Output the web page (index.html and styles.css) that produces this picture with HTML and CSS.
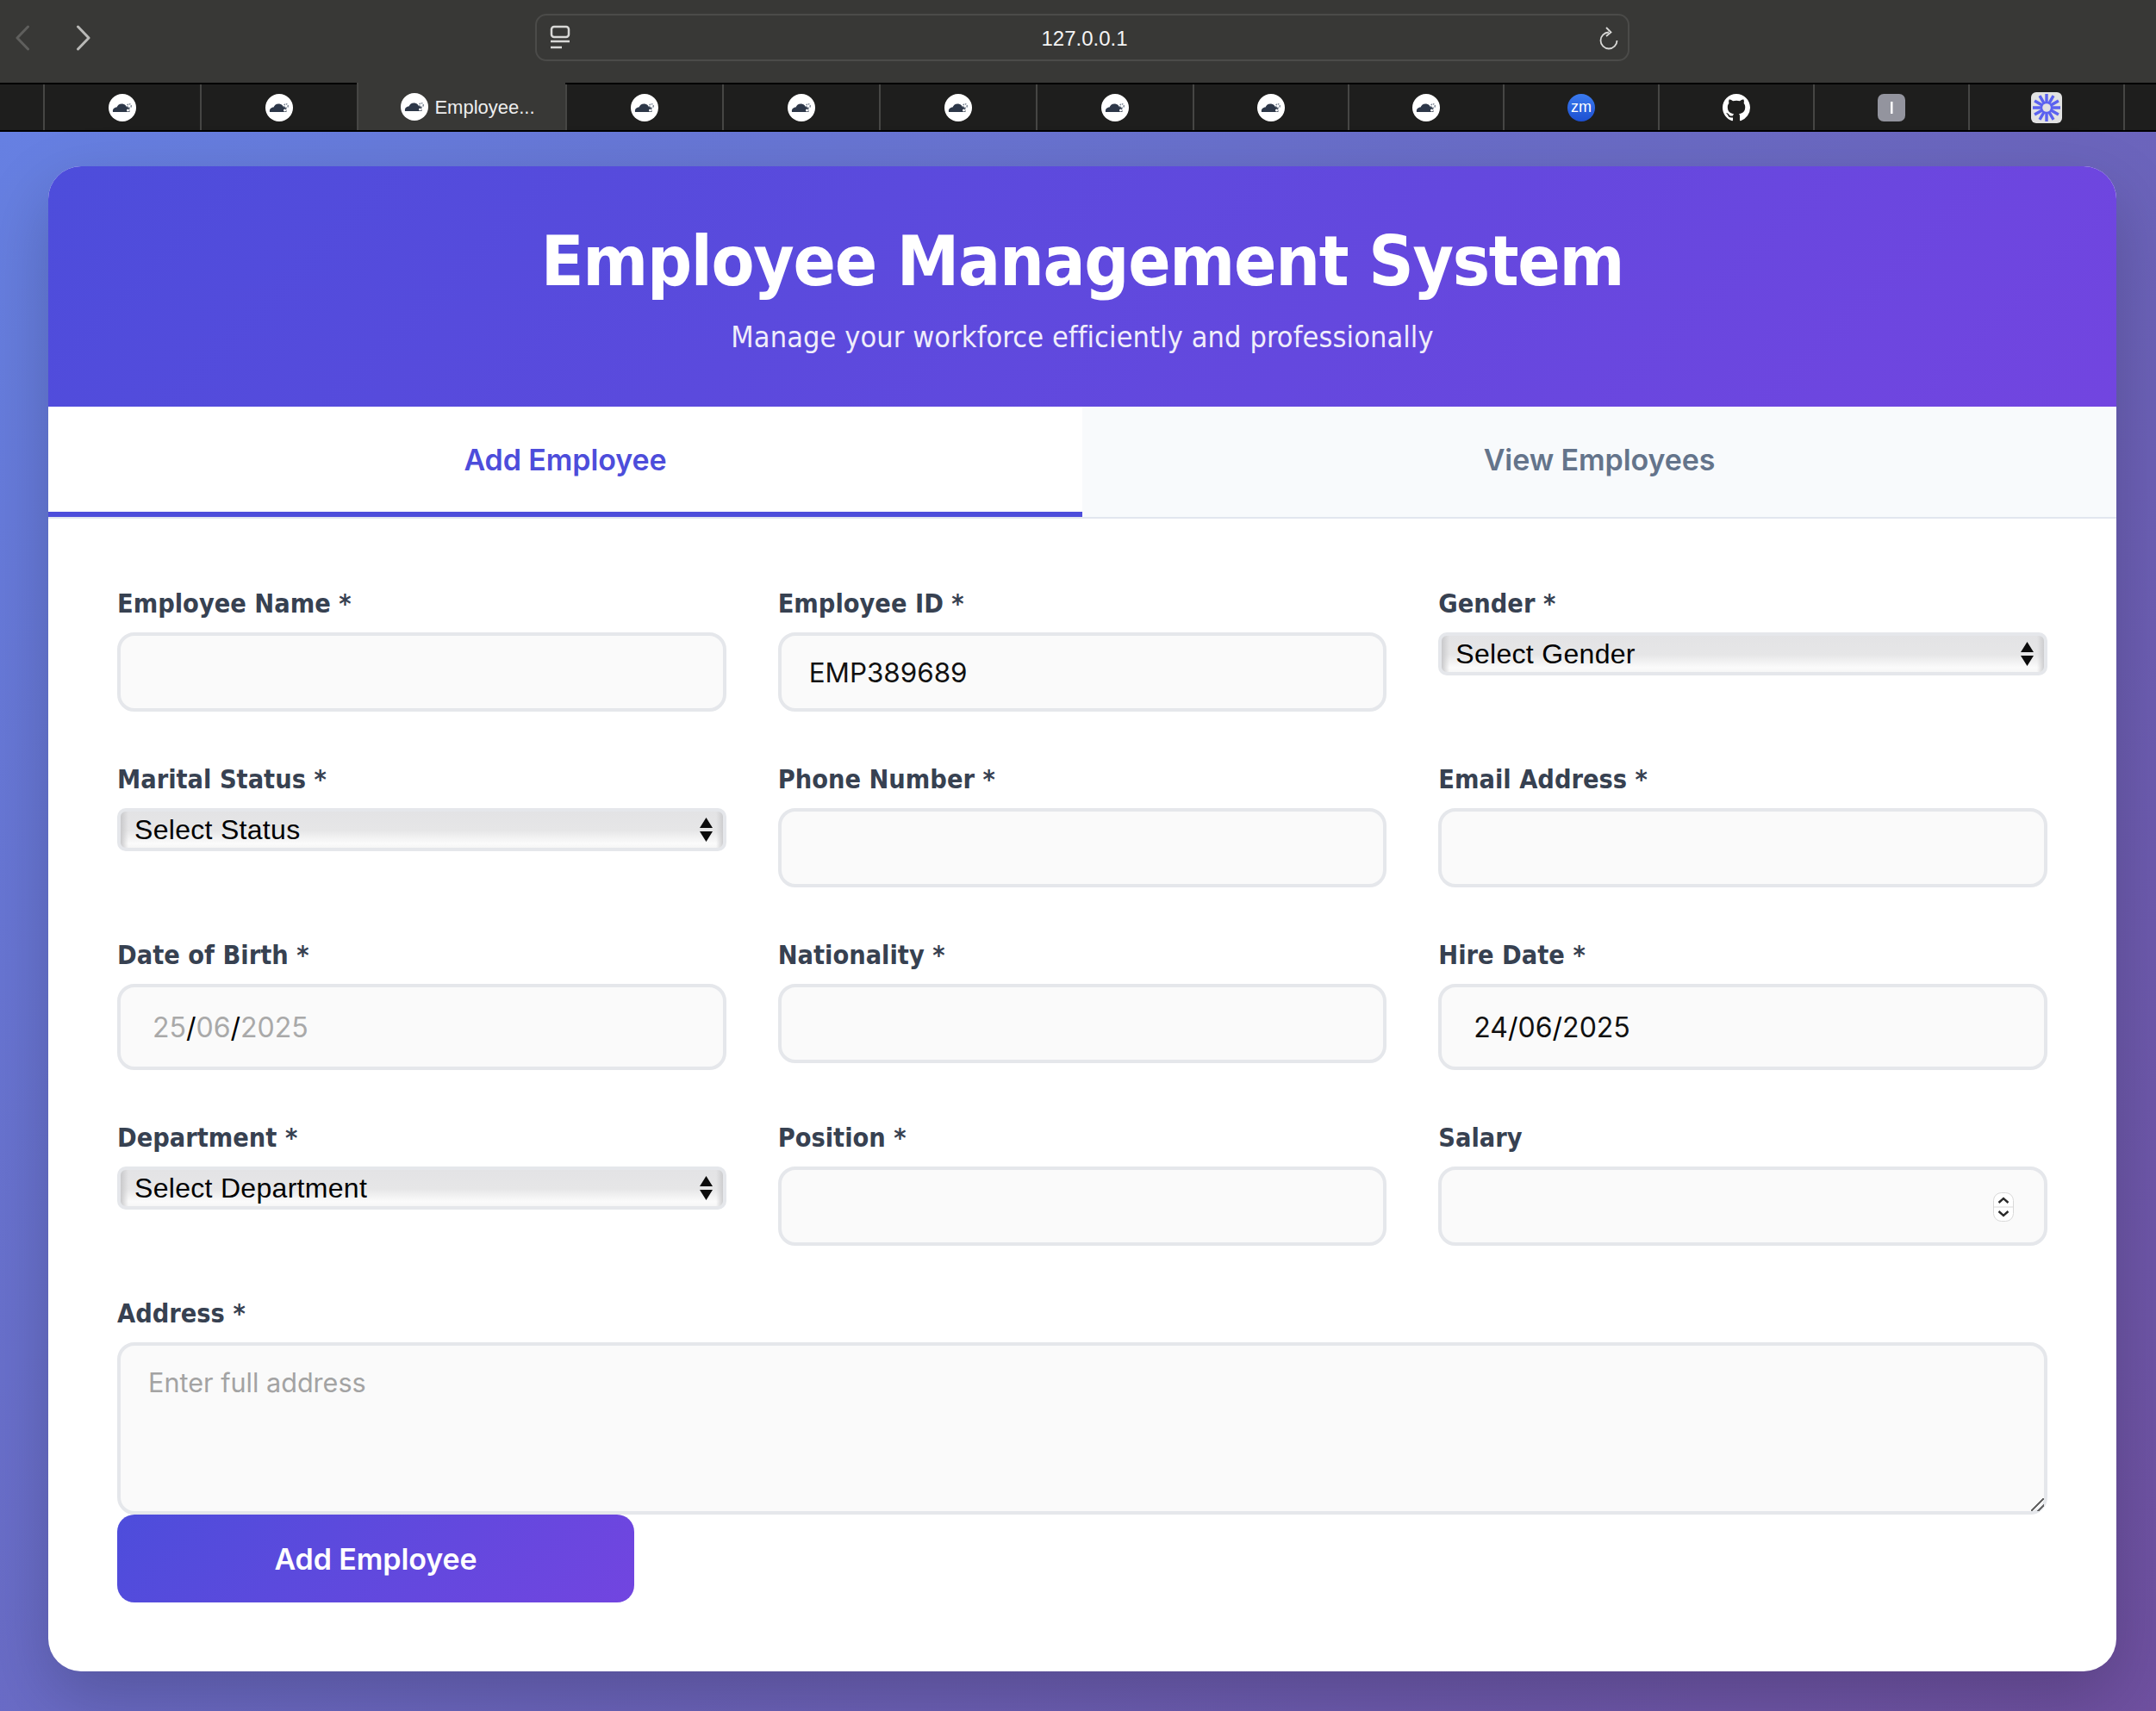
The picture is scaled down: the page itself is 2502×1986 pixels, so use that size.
FILE: index.html
```html
<!DOCTYPE html>
<html lang="en">
<head>
  <meta charset="UTF-8">
  <title>Employee Management System</title>
  <link rel="stylesheet" href="styles.css">
</head>
<body>

  <svg class="defs" width="0" height="0">
    <symbol id="cloud" viewBox="0 0 32 32">
      <circle cx="16" cy="16" r="16" fill="#fff"/>
      <path d="M5 21c-.6-3 1.600-5.400 4.500-5.400 1-3 3.800-4.600 6.800-4.100 2 .3 3.600 1.500 4.400 3.200 1.800-.2 3.100 .8 3.400 2.300l.4 4z" fill="#2d3748"/>
      <circle cx="24" cy="14" r="2.300" fill="none" stroke="#76808f" stroke-width="1.400" stroke-dasharray="1.500 .9"/>
      <circle cx="22.500" cy="19" r="1.500" fill="#fff"/>
    </symbol>
    <symbol id="updown" viewBox="0 0 15 28">
      <path d="M7.500 0l7.500 12h-15zM7.500 28l-7.500-12h15z" fill="#0c0c0c"/>
    </symbol>
  </svg>

  <div class="toolbar">
    <svg class="nav-arrow back" width="18" height="30" viewBox="0 0 18 30"><path d="M15.500 2L3 15l12.500 13"/></svg>
    <svg class="nav-arrow forward" width="18" height="30" viewBox="0 0 18 30"><path d="M2.500 2L15 15 2.500 28"/></svg>
    <div class="address-bar">
      <svg class="reader-icon" width="24" height="30" viewBox="0 0 24 30">
        <rect x="2" y="2" width="20" height="12" rx="3"/>
        <path d="M1 19h22M1 26h13"/>
      </svg>
      <span class="url">127.0.0.1</span>
      <svg class="reload-icon" width="24" height="28" viewBox="0 0 24 28">
        <path d="M12 7.500a9.500 9.500 0 1 0 9.500 9.500"/>
        <path d="M9 2l5.500 5.500-5.500 4.500"/>
      </svg>
    </div>
  </div>

  <div class="tabstrip">
    <div class="tab"><svg class="fav"><use href="#cloud"/></svg></div>
    <div class="tab"><svg class="fav"><use href="#cloud"/></svg></div>
    <div class="tab tab-active"><svg class="fav"><use href="#cloud"/></svg><span>Employee...</span></div>
    <div class="tab"><svg class="fav"><use href="#cloud"/></svg></div>
    <div class="tab"><svg class="fav"><use href="#cloud"/></svg></div>
    <div class="tab"><svg class="fav"><use href="#cloud"/></svg></div>
    <div class="tab"><svg class="fav"><use href="#cloud"/></svg></div>
    <div class="tab tab-narrow"><svg class="fav"><use href="#cloud"/></svg></div>
    <div class="tab tab-narrow"><svg class="fav"><use href="#cloud"/></svg></div>
    <div class="tab tab-narrow">
      <svg class="fav" viewBox="0 0 32 32">
        <defs><linearGradient id="zoom" x1="0" y1="0" x2="0" y2="1"><stop offset="0" stop-color="#3b7bf0"/><stop offset="1" stop-color="#1c4fd0"/></linearGradient></defs>
        <circle cx="16" cy="16" r="16" fill="url(#zoom)"/>
        <text x="16" y="21" class="zoom-text">zm</text>
      </svg>
    </div>
    <div class="tab tab-narrow">
      <svg class="fav" viewBox="0 0 16 16">
        <path fill="#fff" d="M8 0C3.580 0 0 3.580 0 8c0 3.540 2.290 6.530 5.470 7.590.4.070.55-.17.55-.38 0-.19-.01-.82-.01-1.490-2.010.37-2.530-.49-2.690-.94-.09-.23-.48-.94-.82-1.130-.28-.15-.68-.52-.01-.53.630-.01 1.080.58 1.230.82.720 1.210 1.870.87 2.330.66.070-.52.28-.87.510-1.070-1.780-.2-3.640-.89-3.640-3.950 0-.87.310-1.590.820-2.150-.08-.2-.36-1.020.08-2.120 0 0 .67-.21 2.200.82.640-.18 1.320-.27 2-.27s1.360.09 2 .27c1.530-1.040 2.200-.82 2.200-.82.440 1.100.16 1.920.08 2.120.51.560.82 1.270.82 2.150 0 3.070-1.870 3.750-3.650 3.950.29.250.54.730.54 1.480 0 1.070-.01 1.930-.01 2.200 0 .21.150.46.550.38A8.010 8.010 0 0 0 16 8c0-4.420-3.580-8-8-8z"/>
      </svg>
    </div>
    <div class="tab tab-narrow">
      <svg class="fav" viewBox="0 0 32 32">
        <rect width="32" height="32" rx="7" fill="#93949e"/>
        <rect x="15" y="9" width="2.500" height="14" fill="#fff"/>
      </svg>
    </div>
    <div class="tab tab-narrow">
      <svg class="fav fav-large" viewBox="0 0 36 36">
        <rect width="36" height="36" rx="6" fill="#e2e2e2"/>
        <g stroke="#5b62f0" stroke-width="3.400">
          <path d="M18 2v32M2 18h32M10 4.100l16 27.800M26 4.100l-16 27.800M4.100 10l27.800 16M31.900 10l-27.800 16"/>
        </g>
        <circle cx="18" cy="18" r="6.500" fill="#5b62f0"/>
        <circle cx="18" cy="18" r="4.800" fill="#e2e2e2"/>
      </svg>
    </div>
    <div class="tab tab-end"></div>
  </div>

  <main class="page">
    <div class="container">

      <header class="header">
        <h1>Employee Management System</h1>
        <p>Manage your workforce efficiently and professionally</p>
      </header>

      <nav class="nav-tabs">
        <button class="nav-tab active">Add Employee</button>
        <button class="nav-tab">View Employees</button>
      </nav>

      <form class="employee-form">
        <div class="form-grid">

          <div class="form-group">
            <label>Employee Name *</label>
            <input type="text">
          </div>
          <div class="form-group">
            <label>Employee ID *</label>
            <input type="text" value="EMP389689">
          </div>
          <div class="form-group">
            <label>Gender *</label>
            <div class="select-wrap">
              <select><option>Select Gender</option></select>
              <svg class="select-arrows"><use href="#updown"/></svg>
            </div>
          </div>

          <div class="form-group">
            <label>Marital Status *</label>
            <div class="select-wrap">
              <select><option>Select Status</option></select>
              <svg class="select-arrows"><use href="#updown"/></svg>
            </div>
          </div>
          <div class="form-group">
            <label>Phone Number *</label>
            <input type="tel">
          </div>
          <div class="form-group">
            <label>Email Address *</label>
            <input type="email">
          </div>

          <div class="form-group">
            <label>Date of Birth *</label>
            <div class="date-field empty"><span>25</span><i>/</i><span>06</span><i>/</i><span>2025</span></div>
          </div>
          <div class="form-group">
            <label>Nationality *</label>
            <input type="text">
          </div>
          <div class="form-group">
            <label>Hire Date *</label>
            <div class="date-field"><span>24</span><i>/</i><span>06</span><i>/</i><span>2025</span></div>
          </div>

          <div class="form-group">
            <label>Department *</label>
            <div class="select-wrap">
              <select><option>Select Department</option></select>
              <svg class="select-arrows"><use href="#updown"/></svg>
            </div>
          </div>
          <div class="form-group">
            <label>Position *</label>
            <input type="text">
          </div>
          <div class="form-group">
            <label>Salary</label>
            <div class="number-wrap">
              <input type="text">
              <svg class="spinner" width="24" height="34" viewBox="0 0 24 34">
                <rect x=".5" y=".5" width="23" height="33" rx="9" fill="#fff" stroke="#d9d9d9"/>
                <path d="M.5 17h23" stroke="#d9d9d9"/>
                <path d="M6.500 12l5.500-5 5.500 5M6.500 22l5.500 5 5.500-5" fill="none" stroke="#2a2a2a" stroke-width="2.400"/>
              </svg>
            </div>
          </div>

          <div class="form-group full-width">
            <label>Address *</label>
            <textarea placeholder="Enter full address"></textarea>
          </div>

        </div>
        <button type="button" class="btn-submit">Add Employee</button>
      </form>

    </div>
  </main>

</body>
</html>
```

FILE: styles.css
```css
* {
  box-sizing: border-box;
}

html, body {
  margin: 0;
  padding: 0;
}

body {
  font-family: "DejaVu Sans Condensed", "DejaVu Sans", sans-serif;
  background: #383836;
}

.defs {
  position: absolute;
}

/* browser chrome */
.toolbar {
  height: 96px;
  background: #383836;
  display: flex;
  align-items: center;
  padding: 0 0 9px 17px;
}

.nav-arrow {
  fill: none;
  stroke-width: 3px;
  stroke-linecap: round;
  stroke-linejoin: round;
}

.nav-arrow.back {
  stroke: #5f5f5d;
}

.nav-arrow.forward {
  stroke: #b9b9b7;
  margin-left: 53px;
}

.address-bar {
  width: 1270px;
  height: 55px;
  margin-left: 515px;
  border: 2px solid #4b4b49;
  border-radius: 13px;
  display: flex;
  align-items: center;
  justify-content: space-between;
  padding: 0 10px 0 15px;
  color: #f4f4f4;
}

.reader-icon,
.reload-icon {
  fill: none;
  stroke: #d8d8d6;
  stroke-width: 2.500px;
}

.reload-icon {
  stroke-width: 1.800px;
}

.url {
  font-family: "Liberation Sans", sans-serif;
  font-size: 24px;
  padding-top: 2px;
}

.tabstrip {
  height: 57px;
  background: #1e1e1d;
  border-top: 2px solid #000;
  border-bottom: 2px solid #000;
  display: flex;
  padding-left: 50px;
}

.tab {
  width: 182px;
  flex: none;
  border-left: 2px solid #464644;
  display: flex;
  align-items: center;
  justify-content: center;
}

.tab-narrow {
  width: 180px;
}

.tab-end {
  width: 39px;
}

.tab-active {
  width: 242px;
  background: #383836;
  gap: 7px;
  margin-top: -2px;
  padding-left: 14px;
  color: #eee;
  font-family: "Liberation Sans", sans-serif;
  font-size: 22px;
}

.tab-active span {
  padding-top: 2px;
}

.fav {
  width: 32px;
  height: 32px;
  flex: none;
}

.fav-large {
  width: 36px;
  height: 36px;
}

.zoom-text {
  font-family: "Liberation Sans", sans-serif;
  font-size: 18px;
  fill: #fff;
  text-anchor: middle;
}

/* page */
.page {
  height: 1833px;
  padding: 40px 46px 46px 56px;
  background: linear-gradient(135deg, #6680e2 0%, #6f50a0 100%);
}

.container {
  background: #fff;
  border-radius: 38px;
  overflow: hidden;
  height: 1747px;
  box-shadow: 0 30px 80px rgba(0, 0, 0, .2);
}

.header {
  height: 279px;
  padding-top: 55px;
  text-align: center;
  color: #fff;
  background: linear-gradient(135deg, #4d4ddb 0%, #7245e0 100%);
}

.header h1 {
  margin: 0;
  font-size: 81px;
  line-height: 110px;
  font-weight: 700;
  letter-spacing: -1.300px;
}

.header p {
  margin: 9px 0 0;
  font-size: 34px;
  line-height: 48px;
  opacity: .9;
  letter-spacing: .1px;
}

.nav-tabs {
  display: flex;
  height: 130px;
  background: #f8fafc;
  border-bottom: 2px solid #e2e6ef;
}

.nav-tab {
  flex: 1;
  border: none;
  border-bottom: 6px solid transparent;
  background: none;
  font-family: Inter, sans-serif;
  font-size: 34px;
  font-weight: 600;
  letter-spacing: -.1px;
  color: #64748b;
}

.nav-tab.active {
  background: #fff;
  color: #4d4ddb;
  border-bottom-color: #4d4ddb;
}

.employee-form {
  padding: 81px 80px 80px;
}

.form-grid {
  display: grid;
  grid-template-columns: repeat(3, 1fr);
  column-gap: 60px;
  row-gap: 61px;
}

.form-group {
  display: flex;
  flex-direction: column;
  align-items: stretch;
}

.full-width {
  grid-column: 1 / -1;
}

.form-group label {
  font-size: 30.400px;
  line-height: 35px;
  font-weight: 700;
  color: #374151;
  margin-bottom: 16px;
}

input,
textarea,
.date-field {
  width: 100%;
  border: 4px solid #e5e7eb;
  border-radius: 20px;
  background: #fafafa;
  font-family: Inter, sans-serif;
  font-size: 31.400px;
  color: #111;
  outline: none;
}

input {
  height: 92px;
  padding: 2px 32px 0;
}

.date-field {
  height: 100px;
  padding: 0 37px;
  font-size: 32px;
  display: flex;
  align-items: center;
}

.date-field i {
  font-style: normal;
  color: #000;
}

.date-field.empty span {
  color: #a9a9a9;
}

textarea {
  display: block;
  height: 200px;
  padding: 24px 32px;
  font-size: 30.600px;
  resize: vertical;
}

textarea::placeholder {
  color: #a3a3a3;
}

textarea::-webkit-resizer {
  background: linear-gradient(135deg, transparent 0 46%, #666 46% 56%, transparent 56% 72%, #666 72% 82%, transparent 82%);
}

.select-wrap,
.number-wrap {
  position: relative;
}

select {
  display: block;
  width: 100%;
  height: 50px;
  appearance: none;
  border: 4px solid #e5e7eb;
  border-radius: 10px;
  padding: 0 0 0 16px;
  font-family: "Liberation Sans", sans-serif;
  font-size: 32px;
  letter-spacing: .3px;
  color: #000;
  background:
    linear-gradient(90deg, #c9c9cb 0, rgba(255,255,255,0) 9px, rgba(255,255,255,0) calc(100% - 8px), #cdcdcf 100%),
    linear-gradient(180deg, #e3e3e5 0%, #e6e6e7 52%, #fbfbfb 88%, #f6f6f6 100%);
}

.select-arrows {
  position: absolute;
  right: 16px;
  top: 11px;
  width: 15px;
  height: 28px;
  pointer-events: none;
}

.spinner {
  position: absolute;
  right: 39px;
  top: 30px;
}

.btn-submit {
  display: block;
  width: 600px;
  height: 102px;
  border: none;
  border-radius: 20px;
  background: linear-gradient(135deg, #4d4ddb 0%, #7245e0 100%);
  color: #fff;
  font-family: Inter, sans-serif;
  font-size: 34px;
  font-weight: 600;
  letter-spacing: -.1px;
}
```
